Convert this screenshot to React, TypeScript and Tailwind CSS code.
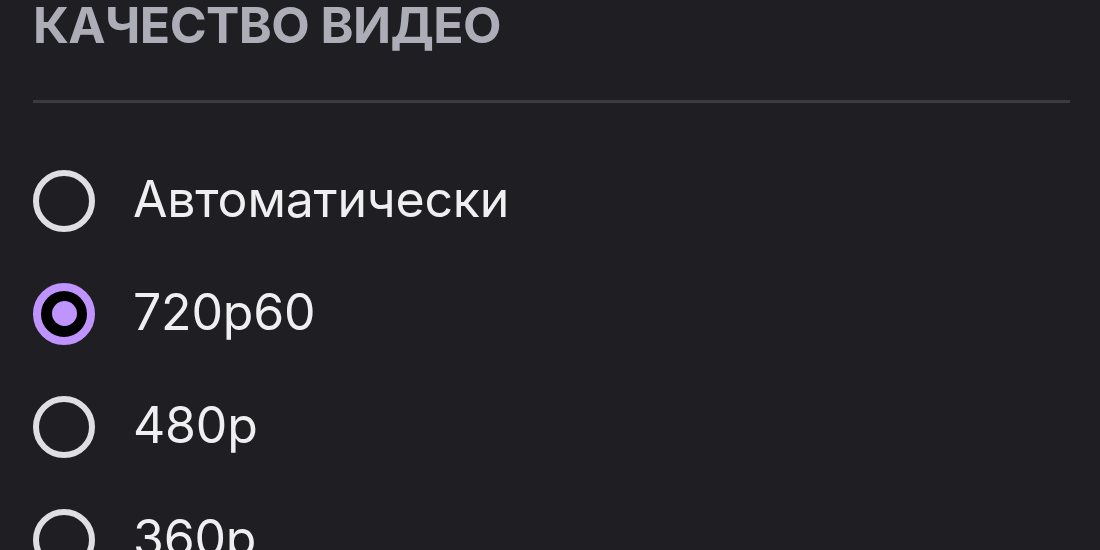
import React from "react";

const options = [
  { id: "auto", label: "Автоматически" },
  { id: "720p60", label: "720p60" },
  { id: "480p", label: "480p" },
  { id: "360p", label: "360p" },
];

function Radio({ checked }: { checked: boolean }) {
  if (checked) {
    return (
      <span className="flex h-[62px] w-[62px] shrink-0 items-center justify-center rounded-full border-[8px] border-[#bf94ff] bg-black">
        <span className="h-[25px] w-[25px] rounded-full bg-[#bf94ff]" />
      </span>
    );
  }
  return (
    <span className="block h-[62px] w-[62px] shrink-0 rounded-full border-[6px] border-[#dedee3]" />
  );
}

export default function App() {
  const selected = "720p60";

  return (
    <div
      className="h-[550px] w-[1100px] overflow-hidden bg-[#1f1f23]"
      style={{ fontFamily: "Inter, 'Noto Sans', sans-serif" }}
    >
      <div className="pl-[33px] pr-[30px]">
        <h2 className="text-[50px] font-bold uppercase leading-[50px] tracking-[-0.6px] text-[#adadb8]">
          Качество видео
        </h2>
        <div className="mt-[50px] h-[3px] bg-[#3a3a3f]" />
        <ul className="mt-[41px]">
          {options.map((o) => (
            <li key={o.id} className="flex h-[113px] items-center gap-[38px]">
              <Radio checked={o.id === selected} />
              <span className="-mt-[3px] text-[50px] leading-none tracking-[-0.2px] text-[#efeff1]">
                {o.label}
              </span>
            </li>
          ))}
        </ul>
      </div>
    </div>
  );
}
